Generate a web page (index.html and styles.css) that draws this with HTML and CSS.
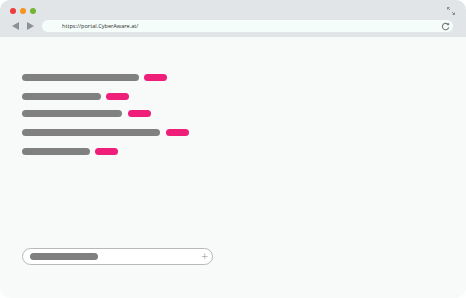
FILE: index.html
```html
<!DOCTYPE html>
<html lang="en">
  <head>
    <meta charset="UTF-8" />
    <meta name="viewport" content="width=device-width, initial-scale=1.0" />
    <title>Browser</title>
    <link rel="stylesheet" href="styles.css">
  </head>
  <body>
    <div class="window">
      <div class="toolbar">
        <div class="top-row">
          <div class="dots">
            <span class="dot red"></span>
            <span class="dot orange"></span>
            <span class="dot green"></span>
          </div>
          <svg class="expand" width="10" height="10" viewBox="0 0 10 10">
            <path d="M1 1 L4 1 L1 4 Z M9 9 L6 9 L9 6 Z" fill="#8a9094" />
            <path d="M1.5 1.5 L4 4 M8.5 8.5 L6 6" stroke="#8a9094" stroke-width="1" />
          </svg>
        </div>
        <div class="nav-row">
          <div class="arrows">
            <svg width="7" height="8" viewBox="0 0 7 8"><path d="M7 0 L7 8 L0 4 Z" fill="#8a9296" /></svg>
            <svg width="7" height="8" viewBox="0 0 7 8"><path d="M0 0 L0 8 L7 4 Z" fill="#8a9296" /></svg>
          </div>
          <div class="url">
            <span class="url-text">https://portal.CyberAware.at/</span>
            <svg class="reload" width="9" height="9" viewBox="0 0 10 10">
              <path d="M8.2 3.2 A3.6 3.6 0 1 0 8.6 6" fill="none" stroke="#6f7578" stroke-width="1.2" />
              <path d="M6.2 3.4 L9.2 3.6 L8.8 0.8 Z" fill="#6f7578" />
            </svg>
          </div>
        </div>
      </div>
      <div class="content">
        <div class="lines">
          <div class="line"><span class="bar" style="width: 117px"></span><span class="tag"></span></div>
          <div class="line"><span class="bar" style="width: 79px"></span><span class="tag"></span></div>
          <div class="line wide"><span class="bar" style="width: 100px"></span><span class="tag"></span></div>
          <div class="line wide"><span class="bar" style="width: 138px"></span><span class="tag"></span></div>
          <div class="line"><span class="bar" style="width: 68px"></span><span class="tag"></span></div>
        </div>
        <div class="input">
          <span class="input-bar"></span>
          <span class="plus">+</span>
        </div>
      </div>
    </div>
  </body>
</html>
```

FILE: styles.css
```css
body {
  margin: 0;
  padding: 0;
  background: #fff;
  font-family: "Open Sans", "Liberation Sans", sans-serif;
}

.window {
  width: 466px;
  height: 298px;
  border-radius: 10px;
  overflow: hidden;
  background: #f8faf9;
  display: flex;
  flex-direction: column;
}

.toolbar {
  height: 37px;
  background: #e2e5e7;
  box-sizing: border-box;
  padding: 5px 11px 0 10px;
}

.top-row {
  display: flex;
  justify-content: space-between;
  align-items: flex-start;
  height: 15px;
}

.dots {
  display: flex;
  gap: 4px;
  padding-top: 3px;
}

.dot {
  width: 6px;
  height: 6px;
  border-radius: 50%;
}

.red {
  background: #ee3b3b;
}

.orange {
  background: #f7931e;
}

.green {
  background: #73b431;
}

.expand {
  margin-top: 1px;
  margin-right: -1px;
}

.nav-row {
  display: flex;
  align-items: center;
  height: 12px;
}

.arrows {
  display: flex;
  gap: 8px;
  padding-left: 2px;
  width: 30px;
}

.url {
  flex: 1;
  height: 12px;
  margin-right: 2px;
  background: #f5fdfb;
  border-radius: 6px;
  display: flex;
  align-items: center;
  justify-content: space-between;
  padding: 0 3px 0 20px;
}

.url-text {
  font-size: 5.6px;
  color: #2b2b2b;
}

.reload {
  display: block;
}

.content {
  flex: 1;
  padding: 37px 22px 0;
  display: flex;
  flex-direction: column;
}

.lines {
  display: flex;
  flex-direction: column;
  gap: 12px;
}

.line {
  display: flex;
  gap: 5px;
  height: 7px;
}

.line:nth-child(3) {
  margin-top: -2px;
}

.line.wide {
  gap: 6px;
}

.bar {
  height: 7px;
  border-radius: 4px;
  background: #808080;
}

.tag {
  width: 23px;
  height: 7px;
  border-radius: 4px;
  background: #ee1e79;
}

.input {
  margin-top: 93px;
  width: 191px;
  height: 17px;
  box-sizing: border-box;
  border: 1px solid #b8b8b8;
  border-radius: 9px;
  background: #fff;
  display: flex;
  align-items: center;
  justify-content: space-between;
  padding: 0 4px 0 7px;
}

.input-bar {
  width: 68px;
  height: 7px;
  border-radius: 4px;
  background: #808080;
}

.plus {
  font-size: 12px;
  line-height: 12px;
  color: #8c8c8c;
  font-weight: 300;
}
```
